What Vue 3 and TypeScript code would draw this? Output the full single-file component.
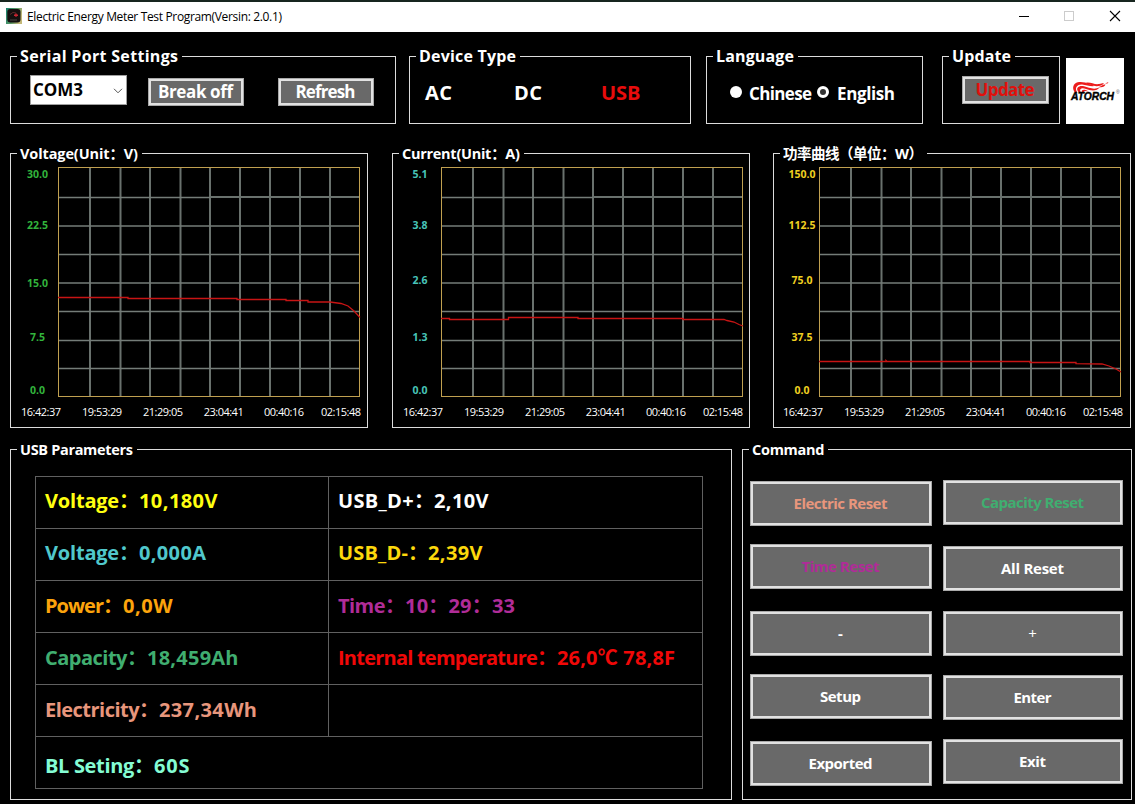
<script setup lang="ts">
import type { Directive } from 'vue'

interface Chart {
  title: string
  titleWidth: number
  cls: string
  plotX: number
  labelX: number
  timeX: number
  labels: string[]
  labelY: number[]
  curve: string
}
interface Command { label: string; width: number; cls?: string }
interface Cell { name: string; nameWidth: number; value: string; valueWidth: number; cls: string; wide?: boolean }

// Spreads the tracking of a caption so that it takes the given width.
const vFit: Directive<HTMLElement, number> = {
  mounted(el, binding) {
    const count = Array.from(el.textContent ?? '').length
    if (count < 2) return
    const gap = (binding.value - el.getBoundingClientRect().width) / (count - 1)
    el.style.letterSpacing = `${gap}px`
    el.style.marginRight = `${-gap}px`
  },
}

const times = ['16:42:37', '19:53:29', '21:29:05', '23:04:41', '00:40:16', '02:15:48']
const timeOffsets = [0, 61, 122, 182.7, 243, 300]
const columns = [32, 62.5, 92, 122.5, 152, 182, 212, 242, 272]
const rows = [59, 87.5, 116, 144.5, 173.5, 201.5]

const charts: Chart[] = [
  {
    title: 'Voltage(Unit：V)', titleWidth: 118, cls: 'volt', plotX: 48, labelX: 27.5, timeX: 31,
    labels: ['30.0', '22.5', '15.0', '7.5', '0.0'], labelY: [25, 76, 134, 188, 241],
    curve: '0,130.5 70,130.5 70,131.5 179,131.5 179,132.5 228,132.5 228,133.5 250,133.5 250,135 272,135 283,136.5 290,139 296,144 302,150.5',
  },
  {
    title: 'Current(Unit：A)', titleWidth: 118, cls: 'amp', plotX: 49, labelX: 28, timeX: 31,
    labels: ['5.1', '3.8', '2.6', '1.3', '0.0'], labelY: [25, 76, 131, 188, 241],
    curve: '0,151.5 8.5,151.5 8.5,152.5 67.5,152.5 67.5,150.5 137,150.5 137,151.5 242,151.5 242,152.5 283,152.5 286,153.5 293,155 298,157.5 302,159',
  },
  {
    title: '功率曲线（单位：W）', titleWidth: 140, cls: 'watt', plotX: 46, labelX: 29, timeX: 30,
    labels: ['150.0', '112.5', '75.0', '37.5', '0.0'], labelY: [25, 76, 131, 188, 241],
    curve: '0,194.5 67,194.5 67,193.5 68,194.5 211,194.5 211,195.5 257,195.5 257,196.7 283,197 290,199 297,202 302,205',
  },
]

const cells: Cell[] = [
  { name: 'Voltage：', nameWidth: 94, value: '10,180V', valueWidth: 78.5, cls: 'yellow up' },
  { name: 'USB_D+：', nameWidth: 96, value: '2,10V', valueWidth: 54.5, cls: 'white up' },
  { name: 'Voltage：', nameWidth: 94, value: '0,000A', valueWidth: 67, cls: 'cyan up' },
  { name: 'USB_D-：', nameWidth: 90, value: '2,39V', valueWidth: 54.5, cls: 'gold up' },
  { name: 'Power：', nameWidth: 78, value: '0,0W', valueWidth: 49.5, cls: 'orange' },
  { name: 'Time：', nameWidth: 67, value: '10：29：33', valueWidth: 110, cls: 'purple' },
  { name: 'Capacity：', nameWidth: 102, value: '18,459Ah', valueWidth: 91.5, cls: 'green' },
  { name: 'Internal temperature：', nameWidth: 219, value: '26,0℃ 78,8F', valueWidth: 118, cls: 'red' },
  { name: 'Electricity：', nameWidth: 114, value: '237,34Wh', valueWidth: 98, cls: 'salmon' },
  { name: '', nameWidth: 0, value: '', valueWidth: 0, cls: 'white' },
  { name: 'BL Seting：', nameWidth: 109, value: '60S', valueWidth: 35.5, cls: 'mint down', wide: true },
]

const leftCommands: Command[] = [
  { label: 'Electric Reset', width: 94, cls: 'salmon' },
  { label: 'Time Reset', width: 78, cls: 'purple' },
  { label: '-', width: 5 },
  { label: 'Setup', width: 41 },
  { label: 'Exported', width: 64 },
]
const rightCommands: Command[] = [
  { label: 'Capacity Reset', width: 103, cls: 'green' },
  { label: 'All Reset', width: 63 },
  { label: '+', width: 9, cls: 'thin' },
  { label: 'Enter', width: 38 },
  { label: 'Exit', width: 27 },
]
</script>

<template>
  <div class="window">
    <header class="titlebar">
      <svg class="app-icon" width="16" height="16" viewBox="0 0 16 16">
        <defs>
          <linearGradient id="edge" x1="0" y1="0" x2="1" y2="0.4">
            <stop offset="0" stop-color="#16806c" />
            <stop offset="0.6" stop-color="#5b9a68" />
            <stop offset="1" stop-color="#c3b878" />
          </linearGradient>
        </defs>
        <rect width="16" height="16" fill="url(#edge)" />
        <rect x="1.3" y="1" width="13.2" height="13.6" rx="3" fill="#14100f" />
        <path d="M4 6.5Q7 3 10 5" fill="none" stroke="#5b2a2c" stroke-width="1" />
        <path d="M8 7.2h4M10 5.5v3.2" stroke="#c82431" stroke-width="1.5" />
        <path d="M4 12h7" stroke="#4a4444" stroke-width="1" />
      </svg>
      <span v-fit="255" class="title">Electric Energy Meter Test Program(Versin: 2.0.1)</span>
      <svg class="controls" width="102" height="12" viewBox="0 0 102 12">
        <path d="M0 6.5h10" stroke="#000" />
        <rect x="45.5" y="1.5" width="9" height="9" fill="none" stroke="#ccc" />
        <path d="M91 1l10 10M101 1l-10 10" stroke="#000" stroke-width="1.1" />
      </svg>
    </header>

    <div class="top-row">
      <section class="group serial">
        <h2 class="legend"><span v-fit="158">Serial Port Settings</span></h2>
        <div class="combo">
          <span v-fit="50">COM3</span>
          <svg width="10" height="6" viewBox="0 0 10 6"><path d="M1 .8l4 4 4-4" fill="none" stroke="#555" /></svg>
        </div>
        <button class="btn small break"><span v-fit="75">Break off</span></button>
        <button class="btn small"><span v-fit="60">Refresh</span></button>
      </section>

      <section class="group device">
        <h2 class="legend"><span v-fit="97">Device Type</span></h2>
        <span class="type"><span v-fit="27">AC</span></span>
        <span class="type dc"><span v-fit="28">DC</span></span>
        <span class="type active"><span v-fit="39.5">USB</span></span>
      </section>

      <section class="group language">
        <h2 class="legend"><span v-fit="78">Language</span></h2>
        <i class="radio" />
        <span v-fit="63" class="option">Chinese</span>
        <i class="radio checked" />
        <span v-fit="58" class="option">English</span>
      </section>

      <section class="group update">
        <h2 class="legend"><span v-fit="59">Update</span></h2>
        <button class="btn small upd"><span v-fit="59">Update</span></button>
      </section>

      <svg class="logo" width="58" height="66" viewBox="0 0 58 66">
        <rect width="58" height="66" fill="#fff" />
        <g fill="#ec1c1c">
          <path d="M9.500 35C5.500 31 6.500 25 13 24C20 23.300 24 27.500 30 27.500C26 29.500 21 27 16 26.500C10 26.300 8.500 31 11.500 34.500Z" />
          <path d="M12.500 34C9 30 13 27.200 18 28.300C23 29.500 28 32.500 34 29C31 33.500 25 33 20 31C16 29.500 13 30.500 14.500 34Z" />
          <path d="M16 34C15 31.500 19 31 22.500 33.500C20 33 18 32.500 18 34Z" />
          <path d="M18 25C24 23 28 27 33 26C36 25.500 36 25 38 25.300C36 28.500 29 29 25 27Z" />
          <path d="M33 29C36 28 36 26.500 39.500 26.500C39 28.500 36 30 33 29Z" />
          <path d="M39 25.500L42.500 24L41.500 25.500Z" />
        </g>
        <text x="5" y="42" textLength="43" lengthAdjust="spacingAndGlyphs" class="brand">ATORCH</text>
        <text x="50" y="36" class="reg">®</text>
      </svg>
    </div>

    <div class="chart-row">
      <section v-for="c in charts" :key="c.cls" class="group chart" :class="c.cls">
        <h2 class="legend"><span v-fit="c.titleWidth">{{ c.title }}</span></h2>
        <svg width="356" height="273" viewBox="1 1 356 273">
          <g :transform="`translate(${c.plotX} 14)`">
            <path v-for="x in columns" :key="x" class="grid-line vertical" :d="`M${x} 1V229`" />
            <path v-for="y in rows" :key="y" class="grid-line" :d="`M1 ${y}H301`" />
            <path class="grid-line" d="M1 30.500H152" />
            <path class="grid-line vertical" d="M152 30H301" />
            <rect class="frame" x="0.500" y="0.500" width="301" height="229" />
            <polyline class="curve" :points="c.curve" />
          </g>
          <text v-for="(l, i) in c.labels" :key="l" class="scale" :x="c.labelX" :y="c.labelY[i]">{{ l }}</text>
          <text
            v-for="(t, i) in times" :key="t" class="time" textLength="40"
            :x="c.timeX + timeOffsets[i] - 20" y="263"
          >{{ t }}</text>
        </svg>
      </section>
    </div>

    <div class="bottom-row">
      <section class="group params">
        <h2 class="legend"><span v-fit="113">USB Parameters</span></h2>
        <div class="table">
          <div v-for="(cell, i) in cells" :key="i" class="cell" :class="[cell.cls, { wide: cell.wide }]">
            <div class="reading">
              <div class="name" :style="{ width: cell.nameWidth + 'px' }"><span v-fit="cell.nameWidth">{{ cell.name }}</span></div>
              <span v-fit="cell.valueWidth">{{ cell.value }}</span>
            </div>
          </div>
        </div>
      </section>

      <section class="group command">
        <h2 class="legend"><span v-fit="72.5">Command</span></h2>
        <div class="stack left">
          <button v-for="b in leftCommands" :key="b.label" class="btn" :class="b.cls">
            <span v-fit="b.width">{{ b.label }}</span>
          </button>
        </div>
        <div class="stack right">
          <button v-for="b in rightCommands" :key="b.label" class="btn" :class="b.cls">
            <span v-fit="b.width">{{ b.label }}</span>
          </button>
        </div>
      </section>
    </div>
  </div>
</template>

<style>
body { margin: 0; background: #000; }
</style>

<style scoped>
* { box-sizing: border-box; }
.window {
  width: 1135px; height: 804px; overflow: hidden; background: #000; color: #fff;
  font-family: "Open Sans", "Noto Sans CJK SC", sans-serif; font-weight: 700;
  white-space: nowrap;
}
span { display: inline-block; }
.titlebar {
  height: 32px; display: flex; align-items: center; background: #fff; color: #000;
  padding: 0 14px 0 6px; border-top: 2px solid #17251f;
}
.app-icon { margin-right: 5px; margin-top: -2px; }
.title { font-size: 12px; font-weight: 400; margin-top: -1px; }
.controls { margin-left: auto; margin-top: -2px; }

.group { position: relative; border: 1px solid #dcdcdc; display: flex; }
.legend {
  position: absolute; left: 6px; top: -12px; margin: 0; padding: 0 4px 0 3px;
  height: 22px; line-height: 22px; background: #000; font-size: 16px; font-weight: 700;
}
.top-row { display: flex; height: 68px; margin: 24px 0 0 10px; }
.serial { width: 386px; padding: 18px 0 0 19px; }
.device { width: 282px; margin-left: 13px; padding-left: 15px; }
.language { width: 217px; margin-left: 15px; align-items: center; padding: 6px 0 0 23px; }
.update { width: 118px; margin-left: 19px; padding: 19px 0 0 19px; }
.logo { margin: 2px 0 0 6px; }
.brand { font: italic 900 10.500px "Liberation Sans", sans-serif; fill: #000; stroke: #000; stroke-width: .4px; }
.reg { font: 5px "Liberation Sans", sans-serif; fill: #555; }

.combo {
  width: 97px; height: 30px; background: #fff; color: #000; border: 1px solid #a0a0a0;
  display: flex; align-items: center; justify-content: space-between;
  padding: 0 3px 2px 2px; font-size: 17px;
}
.combo svg { margin-top: 4px; }
.btn {
  display: flex; align-items: center; justify-content: center; padding: 0 1px 2px 0;
  background: #696969; border: 1px solid #a9a9a9; box-shadow: inset 0 0 0 2px #e2e2e2;
  color: #fff; font: inherit; font-size: 15px; line-height: 20px; border-radius: 0;
}
.small { width: 96px; height: 28px; margin-top: 3px; padding-bottom: 0; font-size: 17px; }
.break { margin: 3px 34px 0 21px; }
.upd { width: 87px; margin: 0; color: #e0100c; }

.type { width: 89px; font-size: 20px; line-height: 26px; padding-top: 23px; }
.dc { width: 87px; padding-left: 0; }
.active { color: #e80c0c; }
.radio { width: 12px; height: 12px; border-radius: 50%; background: #fff; margin: -2px 7px 0 0; }
.radio.checked { background: #333; border: 3px solid #fff; margin-left: 5px; margin-right: 8px; }
.option { font-size: 17px; }

.chart-row { display: flex; margin: 29px 0 0 10px; height: 275px; }
.chart { width: 358px; }
.amp { margin-left: 24px; }
.watt { margin-left: 23px; }
.chart .legend, .bottom-row .legend { font-size: 14.500px; top: -10px; height: 20px; line-height: 20px; }
.watt .legend { padding-right: 4px; }
.grid-line { stroke: #747c78; stroke-width: 1.500; fill: none; }
.vertical { stroke-width: 2; stroke: #69716d; }
.frame { fill: none; stroke: #c0a050; }
.curve { fill: none; stroke: #c81414; stroke-width: 1.300; }
.scale { font-size: 10.500px; font-weight: 700; text-anchor: middle; }
.time { font-size: 11px; font-weight: 400; fill: #fff; }
.volt .scale { fill: #32b43c; }
.amp .scale { fill: #48c4b8; }
.watt .scale { fill: #f0d020; }

.bottom-row { display: flex; margin: 21px 0 0 10px; height: 351px; }
.params { width: 722px; padding: 26px 0 0 24px; }
.table {
  display: grid; grid-template-columns: 293px 374px; grid-template-rows: repeat(6, 52px);
  width: 668px; height: 313px; border-left: 1px solid #606060; border-top: 1px solid #606060;
}
.cell {
  display: flex; align-items: center; padding: 0 0 4px 9px; font-size: 20px;
  border-right: 1px solid #606060; border-bottom: 1px solid #606060;
}
.reading { display: flex; align-items: baseline; }
.name { flex: none; }
.wide { grid-column: span 2; }
.up { padding-bottom: 7px; }
.down { padding-top: 7px; }

.command { width: 390px; margin-left: 10px; }
.stack { display: flex; flex-direction: column; }
.stack .btn { height: 45px; }
.left { width: 182px; margin: 31px 11px 0 7px; }
.right { width: 180px; margin-top: 30px; }
.left .btn:nth-child(even) { margin: 18px 0 22px; }
.right .btn:nth-child(2) { margin: 21px 0 20px; }
.right .btn:nth-child(4) { margin: 19px 0; }

.yellow { color: #ffff10; }
.white { color: #fff; }
.cyan { color: #50c8cc; }
.gold { color: #fcd80c; }
.orange { color: #fca40c; }
.purple { color: #b02c98; }
.green { color: #40ae70; }
.red { color: #f00808; }
.salmon { color: #e8967c; }
.mint { color: #84fcd4; }
.thin { font-weight: 400; }
</style>
